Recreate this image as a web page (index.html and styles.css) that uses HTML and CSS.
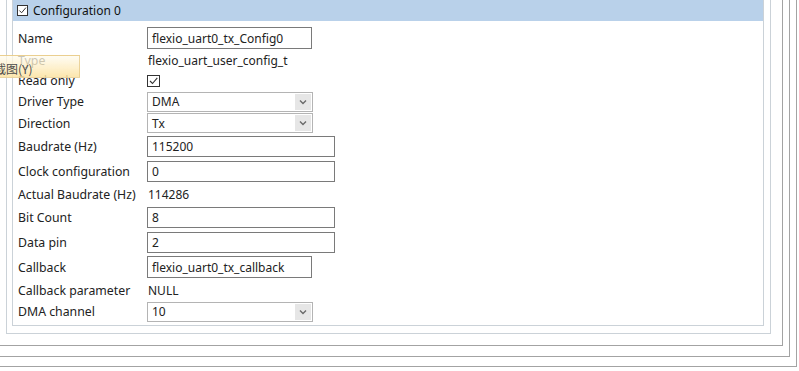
FILE: index.html
```html
<!DOCTYPE html>
<html>
<head>
    <title>Configuration 0</title>
    <link rel="stylesheet" href="styles.css">
</head>
<body>
    <div class="frame outer-5">
        <div class="frame outer-4">
            <div class="frame outer-3">
                <div class="frame outer-2">
                    <div class="group">
                        <div class="group-head">
                            <span class="check"><svg viewBox="0 0 10 10"><path d="M1.5 5 L4 7.5 L8.8 1.8"/></svg></span>
                            <span>Configuration 0</span>
                        </div>
                        <div class="props">
                            <div class="row r-short"><span class="label">Name</span><span class="field short">flexio_uart0_tx_Config0</span></div>
                            <div class="row r-text"><span class="label">Type</span><span class="value">flexio_uart_user_config_t</span></div>
                            <div class="row"><span class="label">Read only</span><span class="check big"><svg viewBox="0 0 10 10"><path d="M1.5 5 L4 7.5 L8.8 1.8"/></svg></span></div>
                            <div class="row"><span class="label">Driver Type</span><span class="field select">DMA<span class="arrow"><svg viewBox="0 0 8 6"><path d="M1 1.5 L4 4.5 L7 1.5"/></svg></span></span></div>
                            <div class="row r-loose"><span class="label">Direction</span><span class="field select">Tx<span class="arrow"><svg viewBox="0 0 8 6"><path d="M1 1.5 L4 4.5 L7 1.5"/></svg></span></span></div>
                            <div class="row r-wide"><span class="label">Baudrate (Hz)</span><span class="field wide">115200</span></div>
                            <div class="row r-wide"><span class="label">Clock configuration</span><span class="field wide">0</span></div>
                            <div class="row"><span class="label">Actual Baudrate (Hz)</span><span class="value">114286</span></div>
                            <div class="row r-wide"><span class="label">Bit Count</span><span class="field wide">8</span></div>
                            <div class="row r-wide"><span class="label">Data pin</span><span class="field wide">2</span></div>
                            <div class="row r-short"><span class="label">Callback</span><span class="field short">flexio_uart0_tx_callback</span></div>
                            <div class="row r-loose"><span class="label">Callback parameter</span><span class="value">NULL</span></div>
                            <div class="row"><span class="label">DMA channel</span><span class="field select">10<span class="arrow"><svg viewBox="0 0 8 6"><path d="M1 1.5 L4 4.5 L7 1.5"/></svg></span></span></div>
                        </div>
                    </div>
                </div>
            </div>
        </div>
    </div>
    <div class="tip">截图(Y)</div>
</body>
</html>
```

FILE: styles.css
```css
* { box-sizing: border-box; }
body { margin: 0; background: #fff; color: #222; font: 12px "Noto Sans", sans-serif; overflow: hidden; position: relative; height: 371px; }

.frame { border: 1px solid #a3a3a3; }
.outer-5 { margin: -5px 2px 0 -30px; padding: 0 6px 9px 6px; }
.outer-4 { padding: 0 6px 10px 6px; }
.outer-3 { padding: 0 11px 11px 21px; }
.outer-2 { padding: 0 6px 7px 5px; border-color: #cbd2d8; }

.group { border: 1px solid #cbd2d8; padding-bottom: 3px; }
.group-head { height: 21px; background: #b9d1ea; display: flex; align-items: center; gap: 5px; padding-left: 4px; color: #111; }

.props { padding: 5px 0 0 5px; }
.row { display: grid; grid-template-columns: 129px auto; align-items: center; height: 21px; }
.row.r-text { height: 20px; }
.row.r-loose { height: 22px; }
.row.r-wide { height: 25px; }
.row.r-short { height: 24px; }
.label { white-space: nowrap; font-size: 12.3px; }
.value { padding-left: 1px; }

.check { width: 11px; height: 11px; border: 1px solid #333; background: #fff; display: inline-flex; }
.check.big { width: 13px; height: 12px; }
.check svg { width: 100%; height: 100%; }
.check path { fill: none; stroke: #333; stroke-width: 1.1; }

.field { height: 20px; border: 1px solid #7a7a7a; padding: 0 4px; display: flex; align-items: center; background: #fff; white-space: nowrap; }
.field.short { width: 165px; height: 22px; }
.field.wide { width: 188px; height: 21px; }
.field.select { width: 166px; border-color: #b4b4b4; justify-content: space-between; padding-right: 1px; }
.arrow { width: 16px; height: 16px; background: #e6e6e6; display: flex; align-items: center; justify-content: center; }
.arrow svg { width: 8px; height: 6px; }
.arrow path { fill: none; stroke: #6a6a6a; stroke-width: 1.4; }

.tip { position: absolute; left: -18px; top: 55px; width: 98px; height: 23px; padding: 4px 0 0 11px; border: 1px solid rgba(226, 196, 130, 0.7); background: linear-gradient(rgba(255, 252, 240, 0.75), rgba(252, 226, 160, 0.85)); color: #4a4a4a; font: 12px "Noto Sans CJK SC", sans-serif; }
```
